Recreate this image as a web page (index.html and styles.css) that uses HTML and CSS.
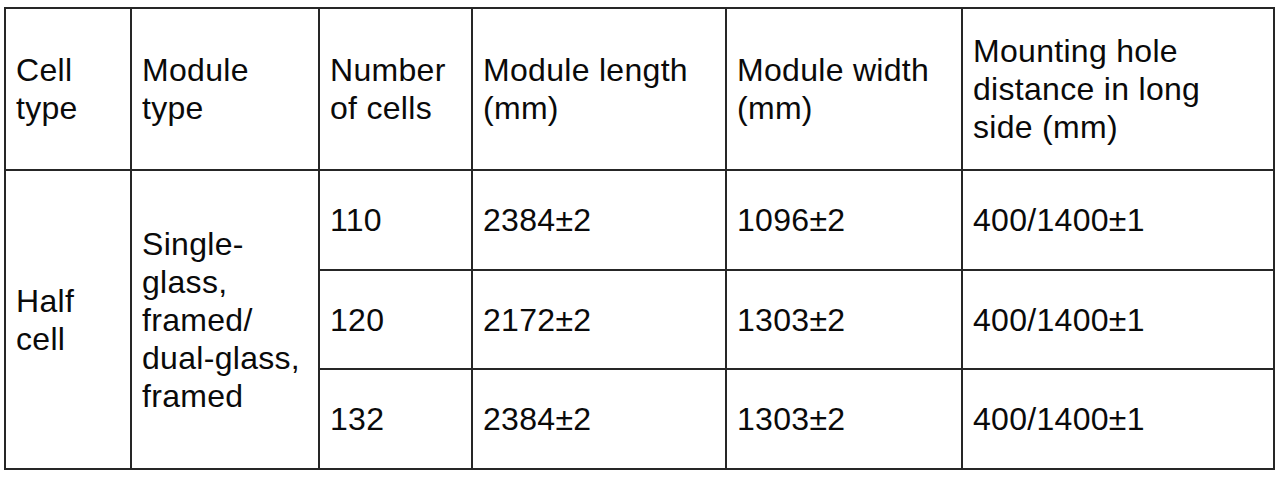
FILE: index.html
```html
<!DOCTYPE html>
<html lang="en">
<head>
<meta charset="utf-8">
<title>Module specifications</title>
<link rel="stylesheet" href="styles.css">
</head>
<body>
<div class="spec-table">
  <div class="cell head">Cell<br>type</div>
  <div class="cell head">Module<br>type</div>
  <div class="cell head">Number<br>of cells</div>
  <div class="cell head">Module length<br>(mm)</div>
  <div class="cell head">Module width<br>(mm)</div>
  <div class="cell head">Mounting hole<br>distance in long<br>side (mm)</div>

  <div class="cell span3">Half<br>cell</div>
  <div class="cell span3">Single-<br>glass,<br>framed/<br>dual-glass,<br>framed</div>
  <div class="cell">110</div>
  <div class="cell">2384±2</div>
  <div class="cell">1096±2</div>
  <div class="cell">400/1400±1</div>

  <div class="cell">120</div>
  <div class="cell">2172±2</div>
  <div class="cell">1303±2</div>
  <div class="cell">400/1400±1</div>

  <div class="cell">132</div>
  <div class="cell">2384±2</div>
  <div class="cell">1303±2</div>
  <div class="cell">400/1400±1</div>
</div>
</body>
</html>
```

FILE: styles.css
```css
html, body {
  margin: 0;
  background: #ffffff;
}

body {
  padding: 7px 0 0 4px;
  font-family: "Liberation Sans", Arial, sans-serif;
  font-size: 32px;
  line-height: 38px;
  letter-spacing: 0.3px;
  color: #0a0a0a;
}

.spec-table {
  display: grid;
  grid-template-columns: 126px 188px 153px 254px 236px 312px;
  grid-template-rows: 162px 100px 99px 100px;
  width: max-content;
  border-top: 2px solid #262626;
  border-left: 2px solid #262626;
}

.cell {
  box-sizing: border-box;
  display: flex;
  align-items: center;
  padding: 0 10px;
  border-right: 2px solid #262626;
  border-bottom: 2px solid #262626;
  white-space: nowrap;
}

.span3 {
  grid-row: span 3;
}
```
